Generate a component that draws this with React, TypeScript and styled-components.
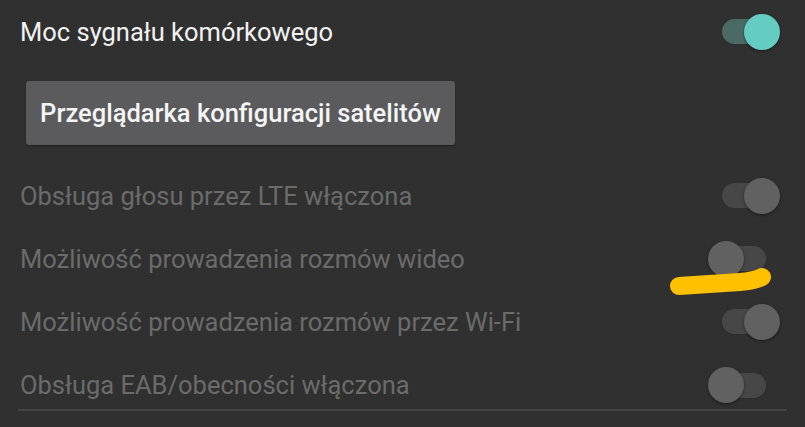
import styled, { createGlobalStyle } from "styled-components"

const GlobalStyle = createGlobalStyle`
    html, body {
        margin: 0;
        padding: 0;
        background: #303030;
    }
    body {
        font-family: Roboto, "Noto Sans", sans-serif;
        -webkit-font-smoothing: antialiased;
    }
`

const Screen = styled.main`
    position: relative;
    width: 805px;
    height: 427px;
    overflow: hidden;
    background: #303030;
`

const Row = styled.div<{ $last?: boolean }>`
    box-sizing: border-box;
    height: ${({ $last }) => ($last ? "56px" : "63px")};
    padding: ${({ $last }) => ($last ? "8px 25px 0 20px" : "0 25px 0 20px")};
    display: flex;
    align-items: center;
    justify-content: space-between;
`

const Label = styled.span<{ $disabled?: boolean }>`
    font-size: 25.5px;
    font-weight: 400;
    color: ${({ $disabled }) => ($disabled ? "#6b6b6b" : "#f2f2f2")};
`

const ButtonRow = styled.div`
    padding: 18px 0 19px 26px;
    display: flex;
`

const ActionButton = styled.button`
    height: 64px;
    width: 429px;
    border: none;
    border-radius: 3px;
    background: #5b5b5d;
    color: #f5f5f5;
    font-family: Roboto, sans-serif;
    font-size: 25.5px;
    font-weight: 500;
    padding: 0;
    box-shadow: 0 1px 2px rgba(0, 0, 0, 0.35);
`

const SwitchBox = styled.div`
    position: relative;
    width: 72px;
    height: 36px;
    display: flex;
    align-items: center;
`

const Track = styled.div<{ $on: boolean; $disabled?: boolean }>`
    margin: 0 14px;
    width: 44px;
    height: 25px;
    border-radius: 13px;
    background: ${({ $on, $disabled }) =>
        $disabled ? "#474747" : $on ? "#4b6a66" : "#474747"};
`

const Thumb = styled.div<{ $on: boolean; $disabled?: boolean }>`
    position: absolute;
    top: 0;
    left: ${({ $on }) => ($on ? "36px" : "0")};
    width: 36px;
    height: 36px;
    border-radius: 50%;
    background: ${({ $disabled }) => ($disabled ? "#616161" : "#64ccc1")};
    box-shadow: 0 1px 3px rgba(0, 0, 0, 0.45);
`

const Divider = styled.hr`
    margin: 0 18px;
    border: none;
    height: 2px;
    background: #434343;
`

const Scribble = styled.svg`
    position: absolute;
    left: 660px;
    top: 262px;
`

const Switch = ({ on, disabled }: { on: boolean; disabled?: boolean }) => (
    <SwitchBox>
        <Track $on={on} $disabled={disabled} />
        <Thumb $on={on} $disabled={disabled} />
    </SwitchBox>
)

const options = [
    { label: "Obsługa głosu przez LTE włączona", on: true },
    { label: "Możliwość prowadzenia rozmów wideo", on: false },
    { label: "Możliwość prowadzenia rozmów przez Wi-Fi", on: true },
    { label: "Obsługa EAB/obecności włączona", on: false },
]

export default function App() {
    return (
        <Screen>
            <GlobalStyle />
            <Row>
                <Label>Moc sygnału komórkowego</Label>
                <Switch on />
            </Row>
            <ButtonRow>
                <ActionButton>Przeglądarka konfiguracji satelitów</ActionButton>
            </ButtonRow>
            {options.map((opt, i) => (
                <Row key={opt.label} $last={i === options.length - 1}>
                    <Label $disabled>{opt.label}</Label>
                    <Switch on={opt.on} disabled />
                </Row>
            ))}
            <Divider />
            {/* marker stroke under the video-calls switch */}
            <Scribble width="120" height="45" viewBox="0 0 120 45">
                <path
                    d="M19 24 L80 20 Q94 19 102 15"
                    fill="none"
                    stroke="#ffc000"
                    strokeWidth="18"
                    strokeLinecap="round"
                    strokeLinejoin="round"
                />
            </Scribble>
        </Screen>
    )
}
